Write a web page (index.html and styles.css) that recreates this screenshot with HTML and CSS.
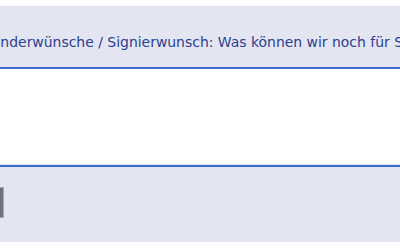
FILE: index.html
```html
<!DOCTYPE html>
<html lang="de">
<head>
  <meta charset="UTF-8">
  <title>Sonderwünsche</title>
  <meta name="viewport" content="width=device-width, initial-scale=1.0">
  <link rel="stylesheet" href="styles.css">
</head>
<body>

  <div class="panel-head">
    <div class="panel-title">Sonderwünsche / Signierwunsch: Was können wir noch für Sie tun?</div>
  </div>

  <div class="panel-body"></div>

  <div class="panel-foot">
    <button class="btn" type="button">Weiter</button>
  </div>

</body>
</html>
```

FILE: styles.css
```css
html, body {
  margin: 0;
  padding: 0;
  background: #fff;
  font-family: "DejaVu Sans", Verdana, sans-serif;
  overflow: hidden;
}

.panel-head {
  margin-top: 6px;
  height: 63px;
  box-sizing: border-box;
  padding-top: 28px;
  background: #e3e5f1;
  border-bottom: 2px solid #3d6ccb;
  box-shadow: 0 2px 5px rgba(0, 0, 0, 0.08);
  overflow: hidden;
}

.panel-title {
  margin-left: -17px;
  font-size: 13.95px;
  line-height: 17px;
  color: #2d408f;
  white-space: nowrap;
}

.panel-body {
  height: 96px;
  background: #fff;
}

.panel-foot {
  height: 77px;
  padding-top: 20px;
  box-sizing: border-box;
  background: #e3e5f1;
  border-top: 2px solid #3d6ccb;
  box-shadow: 0 -1px 0 #dde3f0;
}

.btn {
  display: block;
  margin-left: -80px;
  width: 84px;
  height: 31px;
  border: 1px solid #a6abb3;
  background: #6d737d;
  color: #fff;
  font-family: inherit;
  font-size: 13px;
  padding: 0;
}
```
